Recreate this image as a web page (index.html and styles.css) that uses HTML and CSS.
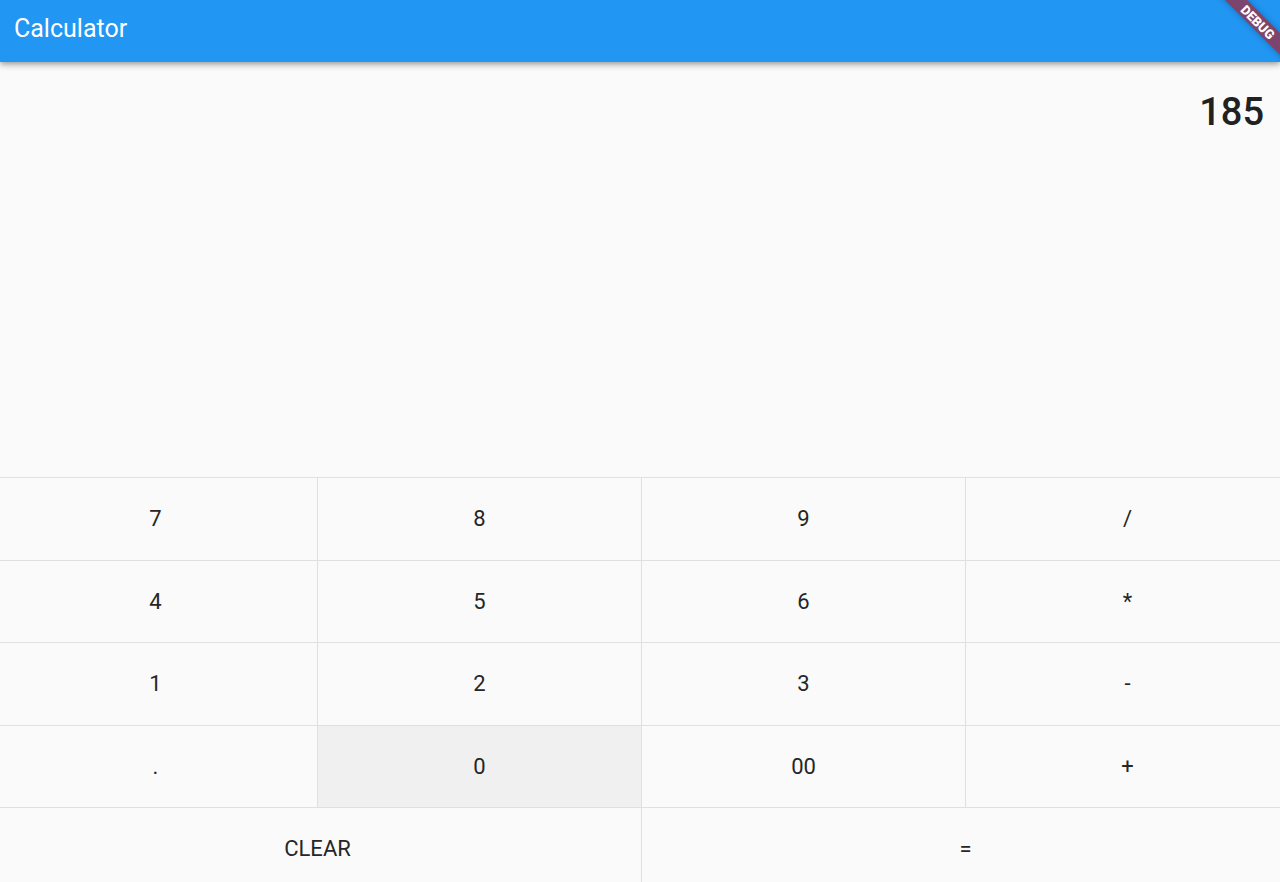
FILE: index.html
```html
<!DOCTYPE html>
<html>
<head>
<meta charset="utf-8">
<title>Calculator</title>
<link rel="stylesheet" href="styles.css">
</head>
<body>
<div class="app">
  <header class="appbar">
    <h1 class="title">Calculator</h1>
  </header>
  <div class="debug-banner"><span>DEBUG</span></div>
  <section class="display">
    <div class="result">185</div>
  </section>
  <section class="keypad">
    <div class="row">
      <div class="key">7</div>
      <div class="key">8</div>
      <div class="key">9</div>
      <div class="key">/</div>
    </div>
    <div class="row">
      <div class="key">4</div>
      <div class="key">5</div>
      <div class="key">6</div>
      <div class="key">*</div>
    </div>
    <div class="row">
      <div class="key">1</div>
      <div class="key">2</div>
      <div class="key">3</div>
      <div class="key">-</div>
    </div>
    <div class="row">
      <div class="key">.</div>
      <div class="key key-active">0</div>
      <div class="key">00</div>
      <div class="key">+</div>
    </div>
    <div class="row row-wide">
      <div class="key">CLEAR</div>
      <div class="key">=</div>
    </div>
  </section>
</div>
</body>
</html>
```
FILE: styles.css
```css
* { box-sizing: border-box; }
html, body {
  margin: 0;
  padding: 0;
  height: 100%;
  overflow: hidden;
  background: #fafafa;
  font-family: Roboto, "Noto Sans", sans-serif;
}
.app {
  position: relative;
  width: 1280px;
  height: 882px;
  overflow: hidden;
  display: flex;
  flex-direction: column;
}
.appbar {
  height: 62px;
  flex: 0 0 62px;
  background: #2196f3;
  display: flex;
  align-items: center;
  padding-left: 14px;
  padding-bottom: 6px;
  box-shadow: 0 2px 4px -1px rgba(0,0,0,.2), 0 4px 5px 0 rgba(0,0,0,.14), 0 1px 10px 0 rgba(0,0,0,.12);
  position: relative;
  z-index: 2;
}
.title {
  margin: 0;
  color: #fff;
  font-size: 25px;
  font-weight: 400;
  letter-spacing: 0;
}
.debug-banner {
  position: absolute;
  left: 1208px;
  top: 14px;
  width: 100px;
  height: 16px;
  background: rgba(170, 28, 40, 0.66);
  transform: rotate(45deg);
  z-index: 3;
  display: flex;
  align-items: center;
  justify-content: center;
  box-shadow: 0 0 6px rgba(0,0,0,.25);
}
.debug-banner span {
  color: #fff;
  font-size: 13px;
  font-weight: 900;
  line-height: 1;
}
.display {
  height: 415px;
  flex: 0 0 415px;
  padding: 28px 16px 0 16px;
  text-align: right;
}
.result {
  font-size: 38px;
  font-weight: 500;
  color: #212121;
  line-height: 1.2;
}
.keypad {
  margin-left: -7px;
  width: 1296px;
  display: flex;
  flex-direction: column;
}
.row {
  display: grid;
  grid-template-columns: repeat(4, 324px);
  height: 82.5px;
  flex: 0 0 82.5px;
}
.row-wide {
  grid-template-columns: repeat(2, 648px);
}
.key {
  border-top: 1px solid #e0e0e0;
  border-left: 1px solid #e0e0e0;
  display: flex;
  align-items: center;
  justify-content: center;
  font-size: 22px;
  color: #262626;
}
.key-active {
  background: #f0f0f0;
}
```
